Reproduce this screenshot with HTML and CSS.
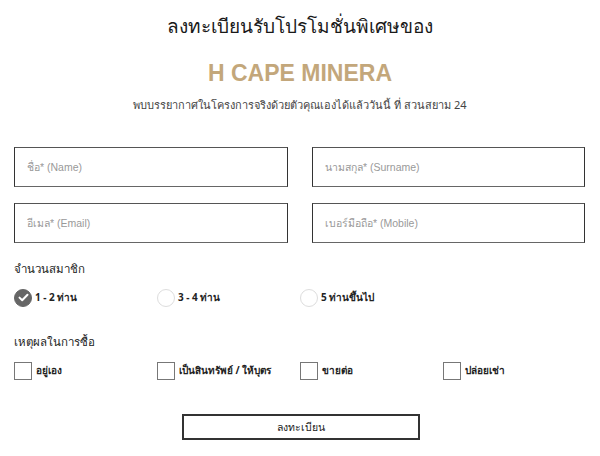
FILE: index.html
```html
<!DOCTYPE html>
<html lang="th">
<head>
    <meta charset="UTF-8">
    <meta name="viewport" content="width=device-width, initial-scale=1.0">
    <title>H CAPE MINERA</title>
    <link rel="stylesheet" href="styles.css">
</head>
<body>
    <div id="regForm">
        <h1 class="title">ลงทะเบียนรับโปรโมชั่นพิเศษของ</h1>
        <h2 class="project">H CAPE MINERA</h2>
        <p class="subtitle">พบบรรยากาศในโครงการจริงด้วยตัวคุณเองได้แล้ววันนี้ ที่ สวนสยาม 24</p>

        <div class="fields">
            <input type="text" placeholder="ชื่อ* (Name)">
            <input type="text" placeholder="นามสกุล* (Surname)">
            <input type="text" placeholder="อีเมล* (Email)">
            <input type="text" placeholder="เบอร์มือถือ* (Mobile)">
        </div>

        <p class="groupLabel">จำนวนสมาชิก</p>
        <div class="options">
            <label class="opt"><span class="radio checked">
                <svg width="11" height="9" viewBox="0 0 11 9"><path d="M1.5 4.6 L4.2 7.2 L9.5 1.8" fill="none" stroke="#fff" stroke-width="2" stroke-linecap="round" stroke-linejoin="round"/></svg>
            </span>1 - 2 ท่าน</label>
            <label class="opt"><span class="radio"></span>3 - 4 ท่าน</label>
            <label class="opt"><span class="radio"></span>5 ท่านขึ้นไป</label>
        </div>

        <p class="groupLabel reason">เหตุผลในการซื้อ</p>
        <div class="options">
            <label class="opt"><span class="box"></span>อยู่เอง</label>
            <label class="opt"><span class="box"></span>เป็นสินทรัพย์ / ให้บุตร</label>
            <label class="opt"><span class="box"></span>ขายต่อ</label>
            <label class="opt"><span class="box"></span>ปล่อยเช่า</label>
        </div>

        <div class="submitRow">
            <button class="submitBtn">ลงทะเบียน</button>
        </div>
    </div>
</body>
</html>
```

FILE: styles.css
```css
body {
    margin: 0;
    background-color: #fff;
    font-family: "Noto Sans", "DejaVu Sans", sans-serif;
    color: #222;
}
#regForm {
    padding: 0 14px;
}
.title {
    margin: 0;
    padding-top: 10px;
    font-size: 19px;
    font-weight: normal;
    text-align: center;
    line-height: 32px;
    color: #1a1a1a;
}
.project {
    margin: 17px 0 0;
    font-family: "Liberation Sans", Arial, sans-serif;
    font-size: 23px;
    font-weight: bold;
    text-align: center;
    line-height: 28px;
    color: #c3a77b;
}
.subtitle {
    margin: 8px 0 0;
    font-size: 11px;
    text-align: center;
    line-height: 20px;
    color: #444;
}
.fields {
    display: grid;
    grid-template-columns: 274px 273px;
    column-gap: 24px;
    row-gap: 16px;
    margin-top: 32px;
}
.fields input {
    box-sizing: border-box;
    height: 40px;
    width: 100%;
    padding: 0 12px;
    border: 1px solid #333;
    border-top-color: #555;
    border-bottom-color: #666;
    border-radius: 0;
    font-family: "Liberation Sans", "Noto Sans", sans-serif;
    font-size: 10.5px;
    outline: none;
}
.fields input::placeholder {
    color: #999;
}
.groupLabel {
    margin: 16px 0 0;
    font-size: 11.5px;
    line-height: 20px;
    color: #222;
}
.reason {
    margin-top: 25px;
}
.options {
    display: grid;
    grid-template-columns: repeat(4, 143px);
    margin-top: 9px;
}
.opt {
    display: flex;
    align-items: center;
    height: 19px;
    font-size: 10px;
    font-weight: bold;
    color: #222;
}
.radio {
    box-sizing: border-box;
    display: flex;
    align-items: center;
    justify-content: center;
    width: 18px;
    height: 18px;
    margin-right: 3px;
    border: 1px solid #ddd;
    border-radius: 50%;
    background-color: #fff;
}
.radio.checked {
    border-color: #666;
    background-color: #666;
}
.box {
    box-sizing: border-box;
    width: 18px;
    height: 18px;
    margin-right: 4px;
    border: 1px solid #777;
    background-color: #fff;
}
.submitRow {
    display: flex;
    justify-content: center;
    margin-top: 34px;
}
.submitBtn {
    box-sizing: border-box;
    width: 238px;
    height: 26px;
    margin-left: 1px;
    background-color: #fff;
    border: 2px solid #333;
    border-radius: 0;
    font-family: "Noto Sans", sans-serif;
    font-size: 10.5px;
    color: #222;
    cursor: pointer;
}
```
